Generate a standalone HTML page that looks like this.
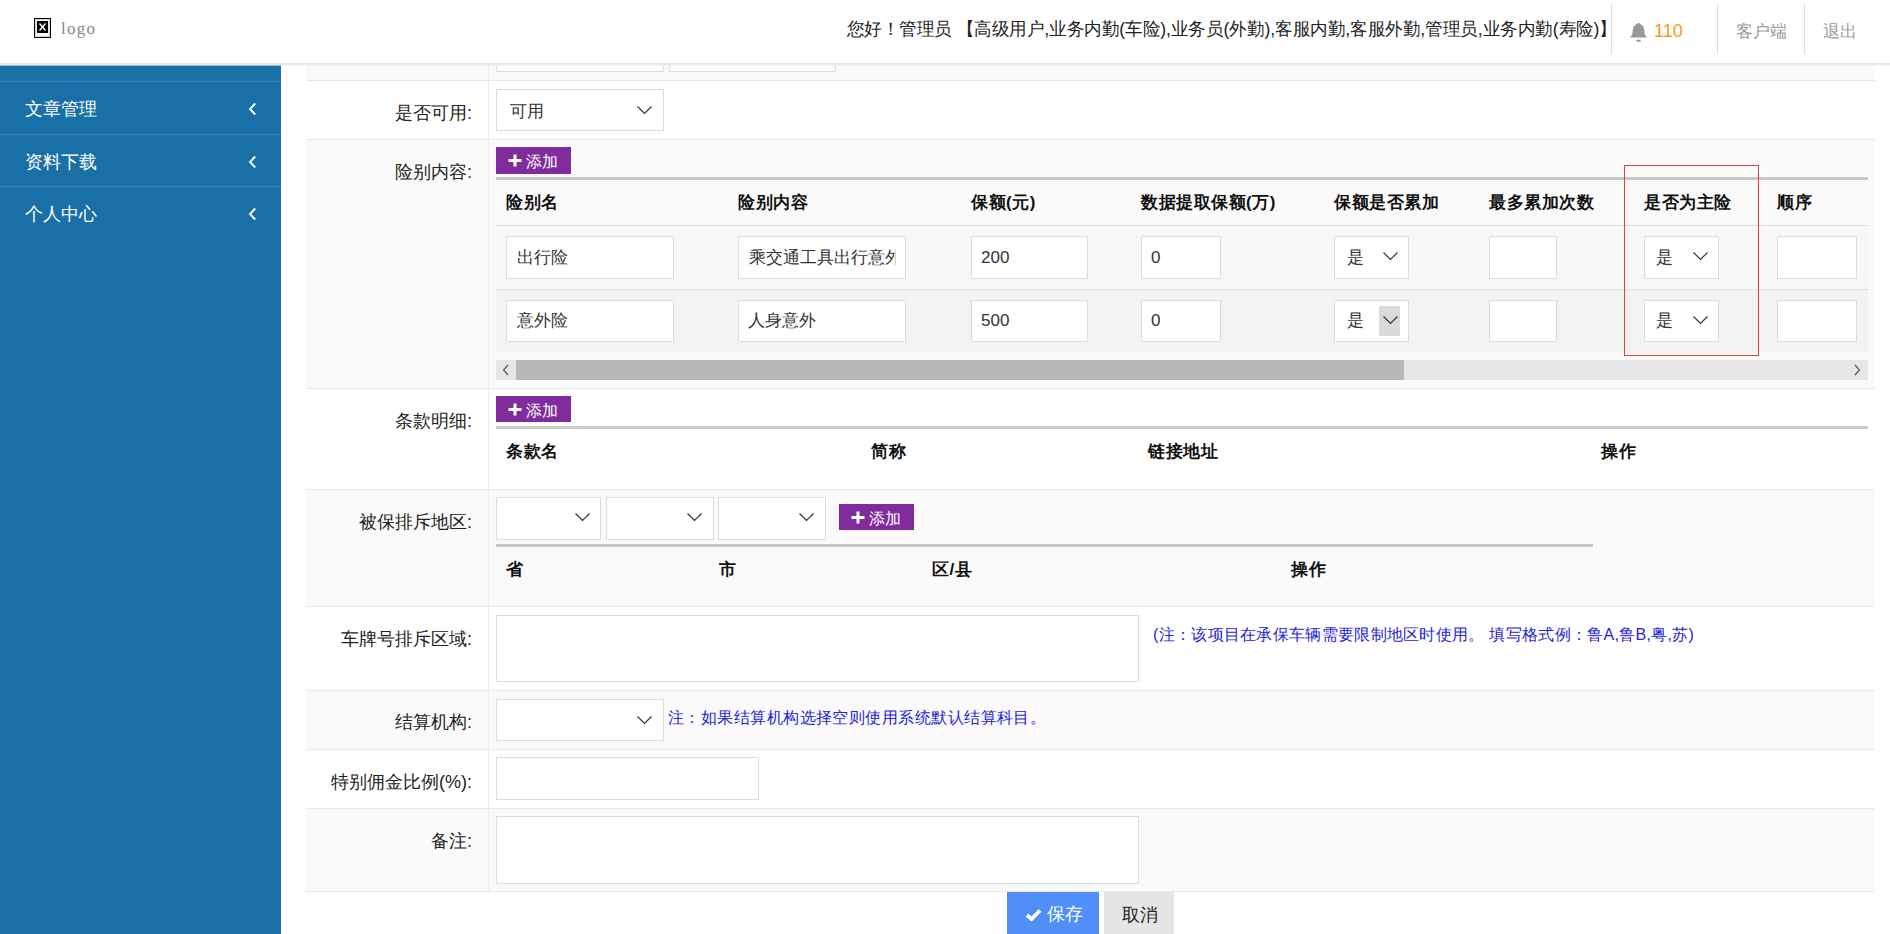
<!DOCTYPE html>
<html><head><meta charset="utf-8">
<style>
*{box-sizing:border-box;margin:0;padding:0}
html,body{width:1890px;height:934px;overflow:hidden;background:#fff;font-family:"Liberation Sans",sans-serif;color:#222}
.a{position:absolute}
#side{left:0;top:0;width:281px;height:934px;background:#1870a6}
.sep{left:0;width:281px;height:1px;background:#3185be}
.mi{left:25px;font-size:18px;color:#fff;line-height:24px;white-space:nowrap}
.chev{left:248px;width:10px;height:13px}
#hdr{left:0;top:0;width:1890px;height:63px;background:#fff;z-index:5}
#hsh{left:0;top:63px;width:1890px;height:3px;background:linear-gradient(#e6e6e6,#ececec 60%,rgba(240,240,240,0.3));z-index:5}
.row{left:306px;width:1569px;border-top:1px solid #e8e8e8}
.g{background:#fafafa}
.vl{left:488px;width:1px;background:#ececec}
.lbl{font-size:18px;line-height:24px;white-space:nowrap;color:#222;text-align:right;right:1418px}
.inp{background:#fff;border:1px solid #dcdcdc}
.sel{background:#fff;border:1px solid #dcdcdc}
.arr{width:15px;height:9px}
.btn{background:#812c9c;color:#fff;font-size:16px;line-height:26px;white-space:nowrap}
.tb{height:3px;background:#c9c9c9}
.th{font-size:17px;font-weight:bold;line-height:24px;white-space:nowrap;color:#111;letter-spacing:0.5px}
.st{color:#555}
.txt{font-size:17px;line-height:24px;white-space:nowrap;color:#333}
.note{font-size:16px;line-height:22px;color:#2424d8;white-space:nowrap}
</style></head><body>

<!-- sidebar -->
<div id="side" class="a">
  <div class="a sep" style="top:81px"></div>
  <div class="a sep" style="top:134px"></div>
  <div class="a sep" style="top:186px"></div>
  <div class="a mi" style="top:97px">文章管理</div>
  <div class="a mi" style="top:150px">资料下载</div>
  <div class="a mi" style="top:202px">个人中心</div>
  <svg class="a chev" style="top:102px" viewBox="0 0 10 12"><polyline points="7.2,1 2,6.5 7.2,12" fill="none" stroke="#fff" stroke-width="1.9"/></svg>
  <svg class="a chev" style="top:155px" viewBox="0 0 10 12"><polyline points="7.2,1 2,6.5 7.2,12" fill="none" stroke="#fff" stroke-width="1.9"/></svg>
  <svg class="a chev" style="top:207px" viewBox="0 0 10 12"><polyline points="7.2,1 2,6.5 7.2,12" fill="none" stroke="#fff" stroke-width="1.9"/></svg>
</div>

<!-- header -->
<div id="hdr" class="a">
  <svg class="a" style="left:34px;top:18px" width="17" height="20" viewBox="0 0 17 20">
    <rect x="0.5" y="0.5" width="16" height="19" fill="#fff" stroke="#000" stroke-width="1"/><rect x="1.8" y="1.8" width="13.4" height="16.4" fill="none" stroke="#c8c8c8" stroke-width="1"/>
    <rect x="3" y="3" width="11" height="12" fill="#000"/>
    <path d="M5.5 5.5 L11.5 12.5 M11.5 5.5 L5.5 12.5" stroke="#fff" stroke-width="1.4"/>
  </svg>
  <div class="a" style="left:61px;top:19px;font-family:'Liberation Serif',serif;font-size:17px;letter-spacing:1.3px;color:#8a8a8a;line-height:20px">logo</div>
  <div class="a" style="right:273px;top:17px;font-size:18px;line-height:24px;color:#222;white-space:nowrap;transform:scaleX(0.974);transform-origin:right center">您好！管理员 【高级用户,业务内勤(车险),业务员(外勤),客服内勤,客服外勤,管理员,业务内勤(寿险)】</div>
  <div class="a" style="left:1611px;top:4px;width:1px;height:50px;background:#ddd"></div>
  <div class="a" style="left:1717px;top:4px;width:1px;height:50px;background:#ddd"></div>
  <div class="a" style="left:1804px;top:4px;width:1px;height:50px;background:#ddd"></div>
  <svg class="a" style="left:1630px;top:22px" width="17" height="20" viewBox="0 0 17 20">
    <path d="M8.5 0.8 L4.8 3.2 Q2.8 4.6 2.6 8.5 L2.5 11.2 Q2.3 13.6 0.4 14.6 L0.4 15.6 L16.6 15.6 L16.6 14.6 Q14.7 13.6 14.5 11.2 L14.4 8.5 Q14.2 4.6 12.2 3.2 Z" fill="#9a9a9a"/>
    <rect x="6.3" y="17.8" width="4.4" height="2" rx="0.8" fill="#9a9a9a"/>
  </svg>
  <div class="a" style="left:1654px;top:20px;font-size:18px;line-height:22px;color:#f59a1b">110</div>
  <div class="a" style="left:1736px;top:20px;font-size:17px;line-height:24px;color:#9a9a9a">客户端</div>
  <div class="a" style="left:1823px;top:20px;font-size:17px;line-height:24px;color:#9a9a9a">退出</div>
</div>

<div id="hsh" class="a"></div>
<!-- form rows -->
<div class="a row g" style="top:40px;height:40px;border-top:none"></div>
<div class="a row" style="top:80px;height:59px"></div>
<div class="a row g" style="top:139px;height:249px"></div>
<div class="a row" style="top:388px;height:101px"></div>
<div class="a row g" style="top:489px;height:117px"></div>
<div class="a row" style="top:606px;height:84px"></div>
<div class="a row g" style="top:690px;height:59px"></div>
<div class="a row" style="top:749px;height:59px"></div>
<div class="a row g" style="top:808px;height:83px"></div>
<div class="a row" style="top:891px;height:43px"></div>
<div class="a vl" style="top:40px;height:851px"></div>

<!-- top partial inputs -->
<div class="a inp" style="left:496px;top:30px;width:168px;height:42px"></div>
<div class="a inp" style="left:669px;top:30px;width:167px;height:42px"></div>

<!-- 是否可用 -->
<div class="a lbl" style="top:101px">是否可用:</div>
<div class="a sel" style="left:496px;top:89px;width:168px;height:42px"></div>
<div class="a txt" style="left:510px;top:100px;color:#333">可用</div>
<svg class="a arr" style="left:637px;top:106px" viewBox="0 0 15 9"><polyline points="0.5,0.5 7.5,7.5 14.5,0.5" fill="none" stroke="#333" stroke-width="1.2"/></svg>

<!-- 险别内容 -->
<div class="a lbl" style="top:160px">险别内容:</div>

<div class="a btn" style="left:496px;top:147px;width:75px;height:27px"><svg class="a" style="left:12px;top:7px" width="14" height="13" viewBox="0 0 14 13"><path d="M7 0.5V12.5M0.5 6.5H13.5" stroke="#fff" stroke-width="3"/></svg><span class="a" style="left:30px;top:2px">添加</span></div>
<div class="a tb" style="left:496px;top:177px;width:1372px"></div>
<div class="a" style="left:496px;top:225px;width:1372px;height:1px;background:#dedede"></div>
<div class="a" style="left:496px;top:226px;width:1372px;height:63px;background:#f8f8f8"></div>
<div class="a" style="left:496px;top:289px;width:1372px;height:1px;background:#dedede"></div>
<div class="a" style="left:496px;top:290px;width:1372px;height:62px;background:#f3f3f3"></div>
<div class="a th" style="left:506px;top:191px">险别名</div>
<div class="a th" style="left:738px;top:191px">险别内容</div>
<div class="a th" style="left:971px;top:191px">保额(元)</div>
<div class="a th" style="left:1141px;top:191px">数据提取保额(万)</div>
<div class="a th" style="left:1334px;top:191px">保额是否累加</div>
<div class="a th" style="left:1489px;top:191px">最多累加次数</div>
<div class="a th" style="left:1644px;top:191px">是否为主险</div>
<div class="a th" style="left:1777px;top:191px">顺序</div>
<!-- row1 -->
<div class="a inp" style="left:506px;top:236px;width:168px;height:43px"></div>
<div class="a txt" style="left:517px;top:246px">出行险</div>
<div class="a inp" style="left:738px;top:236px;width:168px;height:43px;overflow:hidden"><span class="a txt" style="left:10px;top:9px">乘交通工具出行意外</span><div class="a" style="left:157px;top:0;width:10px;height:41px;background:#fff"></div></div>
<div class="a inp" style="left:971px;top:236px;width:117px;height:43px"></div>
<div class="a txt" style="left:981px;top:246px">200</div>
<div class="a inp" style="left:1141px;top:236px;width:80px;height:43px"></div>
<div class="a txt" style="left:1151px;top:246px">0</div>
<div class="a sel" style="left:1334px;top:236px;width:75px;height:43px"></div>
<div class="a txt st" style="left:1347px;top:246px">是</div>
<svg class="a arr" style="left:1383px;top:252px" viewBox="0 0 15 9"><polyline points="0.5,0.5 7.5,7.5 14.5,0.5" fill="none" stroke="#333" stroke-width="1.2"/></svg>
<div class="a inp" style="left:1489px;top:236px;width:68px;height:43px"></div>
<div class="a sel" style="left:1644px;top:236px;width:75px;height:43px"></div>
<div class="a txt st" style="left:1656px;top:246px">是</div>
<svg class="a arr" style="left:1693px;top:252px" viewBox="0 0 15 9"><polyline points="0.5,0.5 7.5,7.5 14.5,0.5" fill="none" stroke="#333" stroke-width="1.2"/></svg>
<div class="a inp" style="left:1777px;top:236px;width:80px;height:43px"></div>
<!-- row2 -->
<div class="a inp" style="left:506px;top:300px;width:168px;height:42px"></div>
<div class="a txt" style="left:517px;top:309px">意外险</div>
<div class="a inp" style="left:738px;top:300px;width:168px;height:42px"></div>
<div class="a txt" style="left:748px;top:309px">人身意外</div>
<div class="a inp" style="left:971px;top:300px;width:117px;height:42px"></div>
<div class="a txt" style="left:981px;top:309px">500</div>
<div class="a inp" style="left:1141px;top:300px;width:80px;height:42px"></div>
<div class="a txt" style="left:1151px;top:309px">0</div>
<div class="a sel" style="left:1334px;top:300px;width:75px;height:42px"></div>
<div class="a" style="left:1379px;top:306px;width:21px;height:30px;background:#dadada"></div>
<div class="a txt st" style="left:1347px;top:309px">是</div>
<svg class="a arr" style="left:1383px;top:316px" viewBox="0 0 15 9"><polyline points="0.5,0.5 7.5,7.5 14.5,0.5" fill="none" stroke="#333" stroke-width="1.2"/></svg>
<div class="a inp" style="left:1489px;top:300px;width:68px;height:42px"></div>
<div class="a sel" style="left:1644px;top:300px;width:75px;height:42px"></div>
<div class="a txt st" style="left:1656px;top:309px">是</div>
<svg class="a arr" style="left:1693px;top:316px" viewBox="0 0 15 9"><polyline points="0.5,0.5 7.5,7.5 14.5,0.5" fill="none" stroke="#333" stroke-width="1.2"/></svg>
<div class="a inp" style="left:1777px;top:300px;width:80px;height:42px"></div>
<!-- scrollbar -->
<div class="a" style="left:496px;top:360px;width:1372px;height:20px;background:#e6e6e6"></div>
<div class="a" style="left:516px;top:360px;width:888px;height:20px;background:#b8b8b8"></div>
<svg class="a" style="left:502px;top:364px" width="8" height="12" viewBox="0 0 8 12"><polyline points="6,1 1.5,6 6,11" fill="none" stroke="#555" stroke-width="1.2"/></svg>
<svg class="a" style="left:1853px;top:364px" width="8" height="12" viewBox="0 0 8 12"><polyline points="2,1 6.5,6 2,11" fill="none" stroke="#555" stroke-width="1.2"/></svg>
<!-- red box -->
<div class="a" style="left:1624px;top:165px;width:135px;height:191px;border:1px solid #e63c3c"></div>

<!-- 条款明细 -->
<div class="a lbl" style="top:409px">条款明细:</div>
<div class="a btn" style="left:496px;top:396px;width:75px;height:26px"><svg class="a" style="left:12px;top:7px" width="14" height="13" viewBox="0 0 14 13"><path d="M7 0.5V12.5M0.5 6.5H13.5" stroke="#fff" stroke-width="3"/></svg><span class="a" style="left:30px;top:2px">添加</span></div>
<div class="a tb" style="left:496px;top:426px;width:1372px"></div>
<div class="a th" style="left:506px;top:440px">条款名</div>
<div class="a th" style="left:871px;top:440px">简称</div>
<div class="a th" style="left:1148px;top:440px">链接地址</div>
<div class="a th" style="left:1601px;top:440px">操作</div>

<!-- 被保排斥地区 -->
<div class="a lbl" style="top:510px">被保排斥地区:</div>
<div class="a sel" style="left:496px;top:497px;width:105px;height:43px"></div>
<svg class="a arr" style="left:575px;top:513px" viewBox="0 0 15 9"><polyline points="0.5,0.5 7.5,7.5 14.5,0.5" fill="none" stroke="#333" stroke-width="1.2"/></svg>
<div class="a sel" style="left:606px;top:497px;width:108px;height:43px"></div>
<svg class="a arr" style="left:687px;top:513px" viewBox="0 0 15 9"><polyline points="0.5,0.5 7.5,7.5 14.5,0.5" fill="none" stroke="#333" stroke-width="1.2"/></svg>
<div class="a sel" style="left:718px;top:497px;width:108px;height:43px"></div>
<svg class="a arr" style="left:799px;top:513px" viewBox="0 0 15 9"><polyline points="0.5,0.5 7.5,7.5 14.5,0.5" fill="none" stroke="#333" stroke-width="1.2"/></svg>
<div class="a btn" style="left:839px;top:504px;width:75px;height:26px"><svg class="a" style="left:12px;top:7px" width="14" height="13" viewBox="0 0 14 13"><path d="M7 0.5V12.5M0.5 6.5H13.5" stroke="#fff" stroke-width="3"/></svg><span class="a" style="left:30px;top:2px">添加</span></div>
<div class="a tb" style="left:496px;top:544px;width:1097px"></div>
<div class="a th" style="left:506px;top:558px">省</div>
<div class="a th" style="left:719px;top:558px">市</div>
<div class="a th" style="left:932px;top:558px">区/县</div>
<div class="a th" style="left:1291px;top:558px">操作</div>

<!-- 车牌号排斥区域 -->
<div class="a lbl" style="top:627px">车牌号排斥区域:</div>
<div class="a inp" style="left:496px;top:615px;width:643px;height:67px"></div>
<div class="a note" style="left:1153px;top:624px;letter-spacing:0.3px">(注：该项目在承保车辆需要限制地区时使用。 填写格式例：鲁A,鲁B,粤,苏)</div>

<!-- 结算机构 -->
<div class="a lbl" style="top:710px">结算机构:</div>
<div class="a sel" style="left:496px;top:699px;width:168px;height:42px"></div>
<svg class="a arr" style="left:637px;top:716px" viewBox="0 0 15 9"><polyline points="0.5,0.5 7.5,7.5 14.5,0.5" fill="none" stroke="#333" stroke-width="1.2"/></svg>
<div class="a note" style="left:668px;top:707px;letter-spacing:0.45px">注：如果结算机构选择空则使用系统默认结算科目。</div>

<!-- 特别佣金比例 -->
<div class="a lbl" style="top:770px">特别佣金比例(%):</div>
<div class="a inp" style="left:496px;top:757px;width:263px;height:43px"></div>

<!-- 备注 -->
<div class="a lbl" style="top:829px">备注:</div>
<div class="a inp" style="left:496px;top:816px;width:643px;height:68px"></div>

<!-- buttons -->
<div class="a" style="left:1007px;top:892px;width:92px;height:42px;background:#4f8ff7"></div>
<svg class="a" style="left:1025px;top:908px" width="17" height="14" viewBox="0 0 17 14"><polyline points="2,7 6.5,11.2 15,2.5" fill="none" stroke="#fff" stroke-width="3.8" stroke-linejoin="round"/></svg>
<div class="a" style="left:1047px;top:902px;font-size:18px;line-height:24px;color:#fff">保存</div>
<div class="a" style="left:1104px;top:892px;width:70px;height:42px;background:#e5e5e5"></div>
<div class="a" style="left:1122px;top:903px;font-size:18px;line-height:24px;color:#222">取消</div>

</body></html>
